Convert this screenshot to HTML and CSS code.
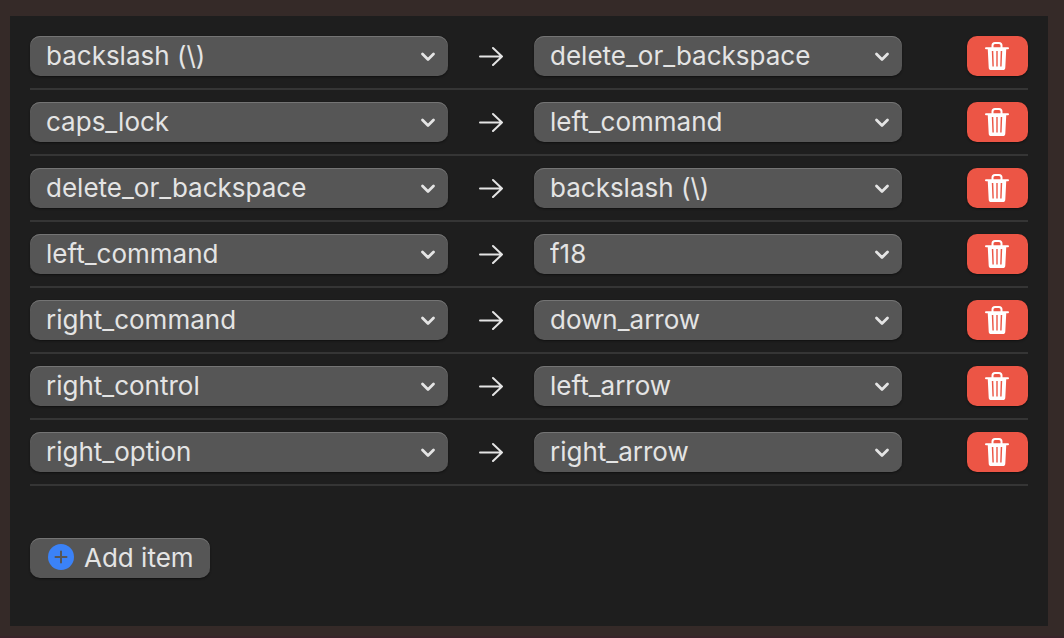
FILE: index.html
```html
<!DOCTYPE html>
<html lang="en">
<head>
    <meta charset="UTF-8">
    <meta name="viewport" content="width=device-width, initial-scale=1.0">
    <title>Simple Modifications</title>
    <link rel="stylesheet" href="styles.css">
</head>
<body>
    <svg class="symbols" aria-hidden="true">
        <symbol id="chevron" viewBox="0 0 16 12">
            <path d="M2.500 4 8 9.400 13.500 4" fill="none" stroke="currentColor" stroke-width="2.800" stroke-linecap="round" stroke-linejoin="round"/>
        </symbol>
        <symbol id="arrow" viewBox="0 0 26 20">
            <path d="M2 10.500h22M15 2l9 8.500-9 8.500" fill="none" stroke="currentColor" stroke-width="2" stroke-linecap="round" stroke-linejoin="round"/>
        </symbol>
        <symbol id="trash" viewBox="0 0 24 28">
            <path d="M7.500 6V3.500Q7.500 1 10 1h4q2.500 0 2.500 2.500V6" fill="none" stroke="currentColor" stroke-width="2"/>
            <path d="M1 6.200h22" stroke="currentColor" stroke-width="2" stroke-linecap="round"/>
            <path fill="currentColor" fill-rule="evenodd" d="M2.700 6h18.600l-1 19.400q-.1 2.600-2.600 2.600H6.300q-2.500 0-2.600-2.600zM6.800 9l.6 15.500h1.400L8.300 9zM11.300 9v15.500h1.400V9zM15.700 9l-.5 15.500h1.400L17.200 9z"/>
        </symbol>
    </svg>

    <main class="panel">
        <ul class="items" id="items"></ul>
        <button type="button" class="add" id="add">
            <svg class="plus" viewBox="0 0 26 26" aria-hidden="true">
                <circle cx="13" cy="13" r="13" fill="#3b82f7"/>
                <path d="M13 7.500v11M7.500 13h11" stroke="#565656" stroke-width="2" stroke-linecap="round"/>
            </svg>
            Add item
        </button>
    </main>

    <script>
        const keys = [
            'backslash (\\)', 'caps_lock', 'delete_or_backspace', 'left_command',
            'right_command', 'right_control', 'right_option',
            'f18', 'down_arrow', 'left_arrow', 'right_arrow'
        ];

        const mappings = [
            ['backslash (\\)', 'delete_or_backspace'],
            ['caps_lock', 'left_command'],
            ['delete_or_backspace', 'backslash (\\)'],
            ['left_command', 'f18'],
            ['right_command', 'down_arrow'],
            ['right_control', 'left_arrow'],
            ['right_option', 'right_arrow']
        ];

        const items = document.getElementById('items');

        function keySelect(className, label, value) {
            const options = keys.map(key =>
                `<option${key === value ? ' selected' : ''}>${key}</option>`
            ).join('');
            return `<div class="key ${className}">
                <select aria-label="${label}">${options}</select>
                <svg class="chevron" aria-hidden="true"><use href="#chevron"/></svg>
            </div>`;
        }

        function addRow(from, to) {
            const row = document.createElement('li');
            row.className = 'row';
            row.innerHTML = `${keySelect('from', 'From key', from)}
                <svg class="arrow" aria-hidden="true"><use href="#arrow"/></svg>
                ${keySelect('to', 'To key', to)}
                <button type="button" class="delete" aria-label="Delete item">
                    <svg class="trash" aria-hidden="true"><use href="#trash"/></svg>
                </button>`;
            row.querySelector('.delete').onclick = () => row.remove();
            items.appendChild(row);
        }

        mappings.forEach(([from, to]) => addRow(from, to));
        document.getElementById('add').onclick = () => addRow(keys[0], keys[0]);
    </script>
</body>
</html>
```
FILE: styles.css
```css
* {
    box-sizing: border-box;
}
body {
    display: flex;
    min-height: 100vh;
    margin: 0;
    padding: 16px 16px 10px 10px;
    border-bottom: 2px solid #38242a;
    background-color: #352a28;
    color: #e4e4e4;
    font-family: Inter, "Liberation Sans", sans-serif;
    font-size: 26px;
}
.symbols {
    position: absolute;
    width: 0;
    height: 0;
}
.panel {
    flex: 1;
    padding: 20px;
    background-color: #1e1e1e;
}
.items {
    margin: 0 0 52px;
    padding: 0;
    list-style: none;
}
.row {
    display: flex;
    align-items: center;
    margin-bottom: 12px;
    padding-bottom: 12px;
    border-bottom: 2px solid #353535;
}
.key {
    display: grid;
    align-items: center;
    min-width: 0;
}
.from {
    flex: 418;
}
.to {
    flex: 368;
}
select, .add, .delete {
    height: 40px;
    border: 0;
    border-radius: 10px;
    background-color: #565656;
    box-shadow: inset 0 1px #747474, 0 1px 2px #111;
    color: inherit;
    font: inherit;
}
select {
    grid-area: 1 / 1;
    width: 100%;
    padding: 0 40px 2px 16px;
    appearance: none;
}
.chevron {
    grid-area: 1 / 1;
    justify-self: end;
    width: 16px;
    height: 12px;
    margin-right: 12px;
    pointer-events: none;
}
.arrow {
    flex: none;
    width: 26px;
    height: 20px;
    margin: 0 30px;
}
.delete {
    display: flex;
    flex: none;
    align-items: center;
    justify-content: center;
    width: 61px;
    margin-left: 65px;
    padding: 0 1px 0 0;
    background-color: #ec5545;
    box-shadow: 0 1px 2px #111;
    color: #fff;
}
.trash {
    width: 24px;
    height: 28px;
}
.add {
    display: flex;
    align-items: center;
    gap: 10px;
    padding: 0 16px 2px 18px;
}
.plus {
    width: 26px;
    height: 26px;
}
```
